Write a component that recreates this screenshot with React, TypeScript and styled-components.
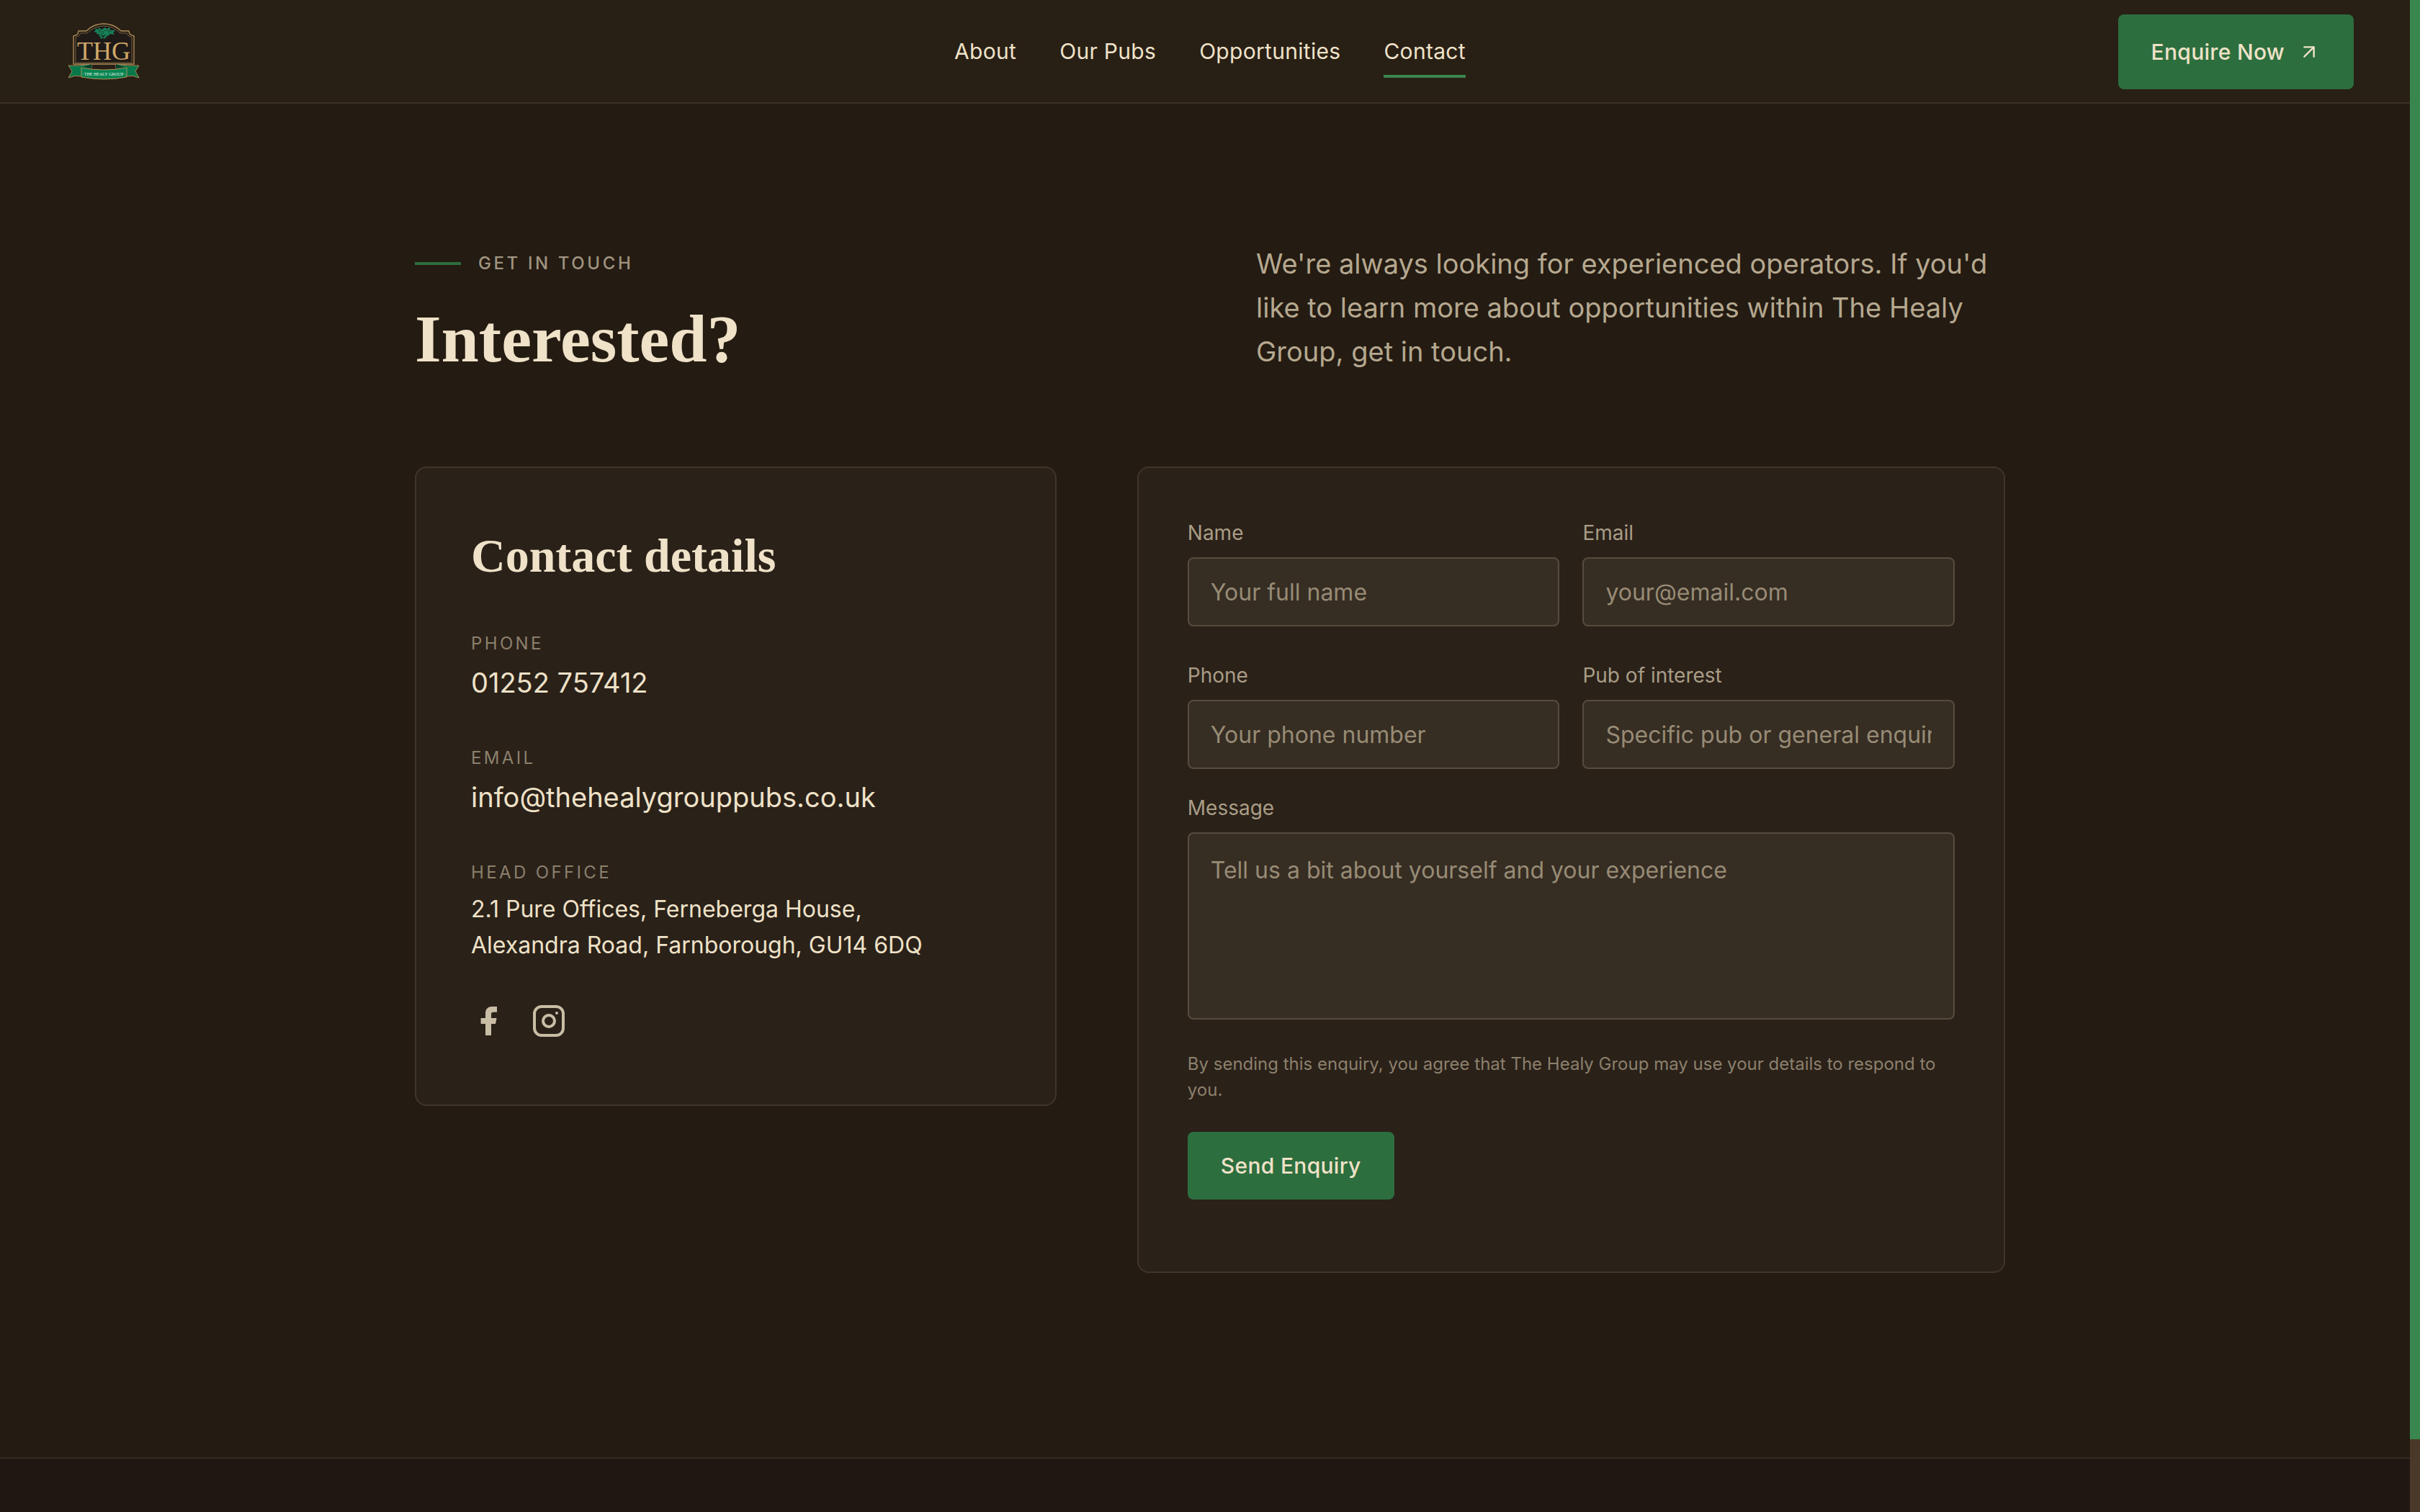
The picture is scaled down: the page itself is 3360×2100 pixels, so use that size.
import React from "react";
import styled, { createGlobalStyle } from "styled-components";

const color = {
  page: "#241b12",
  header: "#281f15",
  card: "#2a2119",
  cardLine: "#3f352b",
  field: "#362d23",
  fieldLine: "#564c3f",
  cream: "#efe2c8",
  soft: "#b5a88f",
  label: "#a99d86",
  dim: "#8c806c",
  green: "#2d6e3e",
  greenLight: "#3a864f",
};

const sans = `Inter, "Liberation Sans", sans-serif`;
const serif = `"Liberation Serif", serif`;

const GlobalStyle = createGlobalStyle`
  *, *::before, *::after { box-sizing: border-box; }
  body {
    margin: 0;
    background: ${color.page};
    color: ${color.cream};
    font-family: ${sans};
  }
  h1, h2, p, dl, dt, dd, address { margin: 0; }
  a { color: inherit; text-decoration: none; }
`;

const Page = styled.div`
  display: flex;
  flex-direction: column;
  min-height: 100vh;
`;

const Header = styled.header`
  display: grid;
  grid-template-columns: 1fr auto 1fr;
  align-items: center;
  height: 144px;
  padding: 2px 92px 0;
  background: ${color.header};
  border-bottom: 2px solid #3a3026;
`;

const Brand = styled.a`
  justify-self: start;
  display: flex;
`;

const Nav = styled.nav`
  display: flex;
  gap: 60px;
`;

const NavLink = styled.a<{ $active?: boolean }>`
  padding: 15px 0 13px;
  border-bottom: 4px solid ${(p) => (p.$active ? color.greenLight : "transparent")};
  font-size: 30px;
  line-height: 40px;
  letter-spacing: 0.01em;
`;

const HeaderAction = styled.a`
  justify-self: end;
  display: flex;
  align-items: center;
  gap: 18px;
  height: 104px;
  padding: 0 46px;
  border-radius: 8px;
  background: ${color.green};
  font-size: 30px;
  font-weight: 500;
  letter-spacing: 0.01em;
`;

const Main = styled.main`
  width: 100%;
  max-width: 2208px;
  margin: 0 auto;
  padding: 192px 0 256px;
`;

const Intro = styled.section`
  display: grid;
  grid-template-columns: 1fr 1fr;
  gap: 128px;
  margin-bottom: 128px;
`;

const Eyebrow = styled.p`
  display: flex;
  align-items: center;
  gap: 24px;
  padding-top: 10px;
  color: #a09480;
  font-size: 24px;
  font-weight: 500;
  line-height: 40px;
  letter-spacing: 0.15em;
  text-transform: uppercase;

  &::before {
    content: "";
    width: 64px;
    height: 4px;
    background: ${color.green};
  }
`;

const Title = styled.h1`
  margin-top: 34px;
  font-family: ${serif};
  font-size: 94px;
  line-height: 100px;
`;

const Lead = styled.p`
  color: ${color.soft};
  font-size: 38px;
  line-height: 61px;
`;

const Columns = styled.div`
  display: grid;
  grid-template-columns: 85fr 115fr;
  align-items: start;
  gap: 112px;
`;

const Card = styled.section`
  border: 2px solid ${color.cardLine};
  border-radius: 16px;
  background: ${color.card};
`;

const DetailsCard = styled(Card)`
  padding: 80px 76px 92px;
`;

const CardTitle = styled.h2`
  margin-bottom: 60px;
  font-family: ${serif};
  font-size: 66px;
  line-height: 84px;
`;

const Details = styled.dl`
  display: grid;
  gap: 51px;
`;

const Term = styled.dt`
  color: ${color.dim};
  font-size: 24px;
  line-height: 40px;
  letter-spacing: 0.14em;
  text-transform: uppercase;
`;

const Value = styled.dd<{ $small?: boolean }>`
  padding-top: ${(p) => (p.$small ? 6 : 0)}px;
  font-size: ${(p) => (p.$small ? 32 : 38)}px;
  line-height: ${(p) => (p.$small ? 50 : 68)}px;

  address { font-style: normal; }
`;

const Socials = styled.div`
  display: flex;
  gap: 36px;
  margin-top: 56px;
  color: #c9bda5;

  a { display: flex; }
`;

const FormCard = styled(Card)`
  padding: 72px 68px 100px;
`;

const Form = styled.form`
  display: flex;
  flex-direction: column;
`;

const FieldGrid = styled.div`
  display: grid;
  grid-template-columns: 1fr 1fr;
  gap: 50px 32px;
  margin-bottom: 36px;
`;

const Field = styled.div`
  display: flex;
  flex-direction: column;
  gap: 16px;

  label {
    color: ${color.label};
    font-size: 28px;
    line-height: 36px;
  }

  input,
  textarea {
    display: block;
    width: 100%;
    height: 96px;
    padding: 0 30px;
    border: 2px solid ${color.fieldLine};
    border-radius: 8px;
    outline: 0;
    background: ${color.field};
    color: ${color.cream};
    font-family: ${sans};
    font-size: 32px;
  }

  textarea {
    height: 260px;
    padding-top: 26px;
    line-height: 50px;
    resize: none;
  }

  input::placeholder,
  textarea::placeholder {
    color: #978b75;
    opacity: 1;
  }
`;

const Consent = styled.p`
  margin: 44px 0 40px;
  color: ${color.dim};
  font-size: 24px;
  line-height: 36px;
`;

const Submit = styled.button`
  align-self: flex-start;
  height: 94px;
  padding: 0 46px;
  border: 0;
  border-radius: 8px;
  background: ${color.green};
  color: ${color.cream};
  font-family: ${sans};
  font-size: 30px;
  font-weight: 500;
  letter-spacing: 0.01em;
`;

const Footer = styled.footer`
  flex: 1;
  border-top: 2px solid #342a23;
  background: #211712;
`;

const ScrollTrack = styled.div`
  position: fixed;
  inset: 0 0 0 auto;
  width: 14px;
  background: #4a3828;
`;

const ScrollThumb = styled.div`
  height: 95.2%;
  background: ${color.greenLight};
`;

const plate =
  "M10 59V20Q17 19 17 13H28Q38 3 52 3T76 13H87Q87 19 94 20V59Z";
const plateInner =
  "M13 57V22Q19 20 20 16H29Q40 6 52 6T75 16H84Q85 20 91 22V57Z";

function Logo() {
  return (
    <svg width="104" height="84" viewBox="0 0 104 84" role="img" aria-label="The Healy Group">
      <path d={plate} fill="#241d17" stroke="#b08f59" strokeWidth="1.3" />
      <path d={plateInner} fill="#1f1a17" stroke="#8d7144" strokeWidth="0.8" />
      <g fill="#16805a">
        <path d="M40 9l4 2 2-3 2 3 4-1-1 3 3 1-4 2-1 2-4-1-2 1-1-3-4-1 3-2z" />
        <path d="M53 8l4 2 3-2 1 4 7 0-3 3 2 3-6-1-3 3-3-2-4 1 1-4-3-2z" />
        <circle cx="47" cy="19" r="1.8" />
        <circle cx="51" cy="18" r="1.8" />
        <circle cx="55" cy="20" r="1.8" />
        <circle cx="49" cy="22" r="1.8" />
        <circle cx="53" cy="22" r="1.6" />
      </g>
      <path d="M43 12l6 2 6-2 8 2M46 10l1 6M58 11l1 6" fill="none" stroke="#1c3d2d" strokeWidth="0.6" />
      <text x="52" y="53" textAnchor="middle" fill="#d0a868" fontFamily={serif} fontSize="36">
        THG
      </text>
      <path d="M3 61Q18 62 35 59V70L21 76Q12 74 3 78L8 69Z" fill="#08784a" stroke="#a98754" strokeWidth="1" />
      <path d="M101 61Q86 62 69 59V70L83 76Q92 74 101 78L96 69Z" fill="#08784a" stroke="#a98754" strokeWidth="1" />
      <path d="M21 64L35 59V67L21 66ZM83 64L69 59V67L83 66Z" fill="#07432c" />
      <path d="M21 64Q52 70 84 64V77Q52 83 21 77Z" fill="#078552" stroke="#b08f59" strokeWidth="1" />
      <text x="52" y="75" textAnchor="middle" fill="#e6f2e6" fontFamily={serif} fontSize="6">
        · THE HEALY GROUP ·
      </text>
    </svg>
  );
}

function ArrowIcon() {
  return (
    <svg width="32" height="32" viewBox="0 0 24 24" fill="none" stroke="currentColor" strokeWidth="1.8" strokeLinecap="round" strokeLinejoin="round" aria-hidden="true">
      <path d="M7 17L17 7M7 7h10v10" />
    </svg>
  );
}

function FacebookIcon() {
  return (
    <svg width="48" height="48" viewBox="0 0 24 24" fill="currentColor" aria-hidden="true">
      <path d="M14 22v-8h3l.8-4H14V7.5c0-1 .5-1.600 1.600-1.600H18V2h-3.500C11.500 2 10 4 10 6.500V10H6.800v4H10v8z" />
    </svg>
  );
}

function InstagramIcon() {
  return (
    <svg width="48" height="48" viewBox="0 0 24 24" fill="none" stroke="currentColor" strokeWidth="2" aria-hidden="true">
      <rect x="2" y="2" width="20" height="20" rx="5" />
      <circle cx="12" cy="12" r="4" />
      <circle cx="17.5" cy="6.5" r="1" fill="currentColor" stroke="none" />
    </svg>
  );
}

const links = ["About", "Our Pubs", "Opportunities", "Contact"];

const fields = [
  { id: "name", label: "Name", type: "text", hint: "Your full name" },
  { id: "email", label: "Email", type: "email", hint: "your@email.com" },
  { id: "phone", label: "Phone", type: "tel", hint: "Your phone number" },
  { id: "pub", label: "Pub of interest", type: "text", hint: "Specific pub or general enquiry" },
];

export default function App() {
  return (
    <Page>
      <GlobalStyle />
      <Header>
        <Brand href="#home">
          <Logo />
        </Brand>
        <Nav>
          {links.map((name) => (
            <NavLink key={name} href="#" $active={name === "Contact"}>
              {name}
            </NavLink>
          ))}
        </Nav>
        <HeaderAction href="#enquire">
          Enquire Now
          <ArrowIcon />
        </HeaderAction>
      </Header>

      <Main>
        <Intro>
          <div>
            <Eyebrow>Get in touch</Eyebrow>
            <Title>Interested?</Title>
          </div>
          <Lead>
            We're always looking for experienced operators. If you'd like to learn more about
            opportunities within The Healy Group, get in touch.
          </Lead>
        </Intro>

        <Columns>
          <DetailsCard>
            <CardTitle>Contact details</CardTitle>
            <Details>
              <div>
                <Term>Phone</Term>
                <Value>
                  <a href="tel:01252757412">01252 757412</a>
                </Value>
              </div>
              <div>
                <Term>Email</Term>
                <Value>
                  <a href="mailto:info@thehealygrouppubs.co.uk">info@thehealygrouppubs.co.uk</a>
                </Value>
              </div>
              <div>
                <Term>Head office</Term>
                <Value $small>
                  <address>
                    2.1 Pure Offices, Ferneberga House,
                    <br />
                    Alexandra Road, Farnborough, GU14 6DQ
                  </address>
                </Value>
              </div>
            </Details>
            <Socials>
              <a href="#facebook" aria-label="Facebook">
                <FacebookIcon />
              </a>
              <a href="#instagram" aria-label="Instagram">
                <InstagramIcon />
              </a>
            </Socials>
          </DetailsCard>

          <FormCard>
            <Form id="enquire">
              <FieldGrid>
                {fields.map((f) => (
                  <Field key={f.id}>
                    <label htmlFor={f.id}>{f.label}</label>
                    <input id={f.id} type={f.type} placeholder={f.hint} />
                  </Field>
                ))}
              </FieldGrid>
              <Field>
                <label htmlFor="message">Message</label>
                <textarea id="message" placeholder="Tell us a bit about yourself and your experience" />
              </Field>
              <Consent>
                By sending this enquiry, you agree that The Healy Group may use your details to
                respond to you.
              </Consent>
              <Submit type="button">Send Enquiry</Submit>
            </Form>
          </FormCard>
        </Columns>
      </Main>

      <Footer />
      <ScrollTrack>
        <ScrollThumb />
      </ScrollTrack>
    </Page>
  );
}
